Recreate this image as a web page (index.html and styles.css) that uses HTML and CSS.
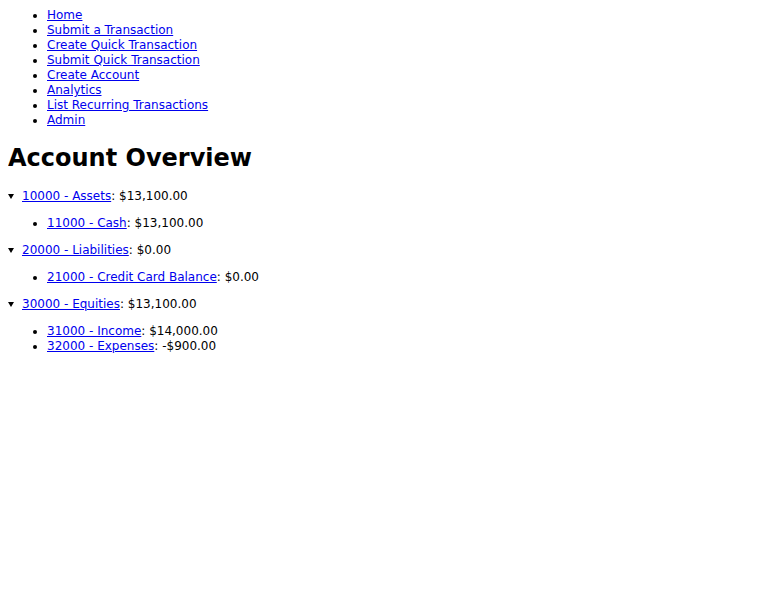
FILE: index.html
```html
<!DOCTYPE html>
<html>
<head>
<meta charset="utf-8">
<title>Account Overview</title>
<link rel="stylesheet" href="styles.css">
</head>
<body>
<ul class="nav">
  <li><a href="#">Home</a></li>
  <li><a href="#">Submit a Transaction</a></li>
  <li><a href="#">Create Quick Transaction</a></li>
  <li><a href="#">Submit Quick Transaction</a></li>
  <li><a href="#">Create Account</a></li>
  <li><a href="#">Analytics</a></li>
  <li><a href="#">List Recurring Transactions</a></li>
  <li><a href="#">Admin</a></li>
</ul>
<h1 class="title">Account Overview</h1>
<details class="group" open>
  <summary><a href="#">10000 - Assets</a>: $13,100.00</summary>
  <ul class="sub">
    <li><a href="#">11000 - Cash</a>: $13,100.00</li>
  </ul>
</details>
<details class="group" open>
  <summary><a href="#">20000 - Liabilities</a>: $0.00</summary>
  <ul class="sub">
    <li><a href="#">21000 - Credit Card Balance</a>: $0.00</li>
  </ul>
</details>
<details class="group" open>
  <summary><a href="#">30000 - Equities</a>: $13,100.00</summary>
  <ul class="sub">
    <li><a href="#">31000 - Income</a>: $14,000.00</li>
    <li><a href="#">32000 - Expenses</a>: -$900.00</li>
  </ul>
</details>
</body>
</html>
```

FILE: styles.css
```css
body {
  margin: 8px;
  font-family: "DejaVu Sans", sans-serif;
  font-size: 12px;
  line-height: 15px;
  color: #000;
  background: #fff;
}
a {
  color: #0000ee;
}
.nav {
  margin: 0;
  padding-left: 39px;
}
.title {
  font-size: 24px;
  line-height: 28px;
  margin: 16px 0 17px;
}
.group summary {
  cursor: pointer;
  list-style: none;
}
.group summary::-webkit-details-marker {
  display: none;
}
.group summary::before {
  content: "";
  display: inline-block;
  border-left: 3px solid transparent;
  border-right: 3px solid transparent;
  border-top: 5px solid #000;
  margin-right: 8px;
  vertical-align: 1px;
}
.sub {
  margin: 12px 0;
  padding-left: 39px;
}
```
